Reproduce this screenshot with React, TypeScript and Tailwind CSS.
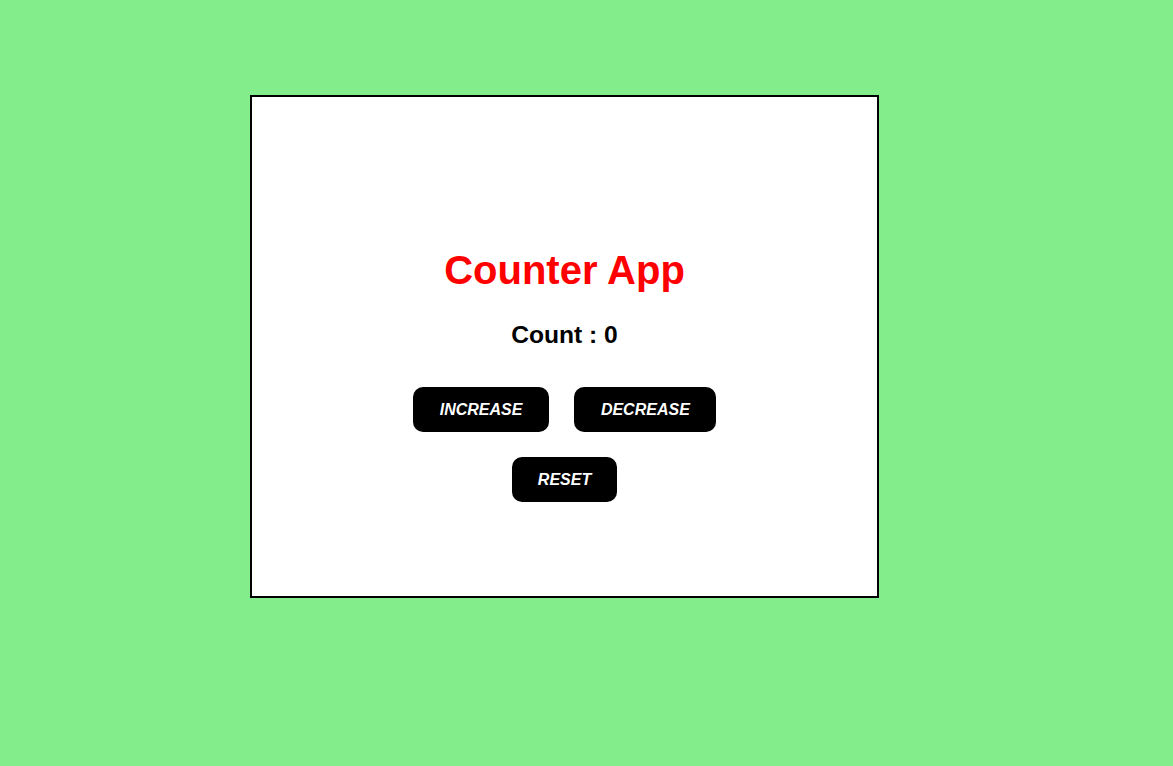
export default function App() {
  return (
    <div
      className="min-h-[766px] w-full bg-[#84ED8B] pt-[95px] pl-[250px]"
      style={{ fontFamily: '"Liberation Sans", Arial, sans-serif' }}
    >
      <div className="flex h-[503px] w-[629px] flex-col items-center border-2 border-black bg-white pt-[150px]">
        <h1 className="m-0 text-[40px] font-bold leading-[46px] text-[#ff0000]">Counter App</h1>
        <div className="mt-[27px] text-[24.6px] font-bold leading-[29px] text-black">Count : 0</div>
        <div className="mt-[38px] flex gap-[25px]">
          <button className="h-[45px] rounded-[10px] bg-black px-[27px] text-[16px] font-bold italic text-white">
            INCREASE
          </button>
          <button className="h-[45px] rounded-[10px] bg-black px-[26.5px] text-[16px] font-bold italic text-white">
            DECREASE
          </button>
        </div>
        <button className="mt-[25px] h-[45px] rounded-[10px] bg-black px-[26px] text-[16px] font-bold italic text-white">
          RESET
        </button>
      </div>
    </div>
  );
}
